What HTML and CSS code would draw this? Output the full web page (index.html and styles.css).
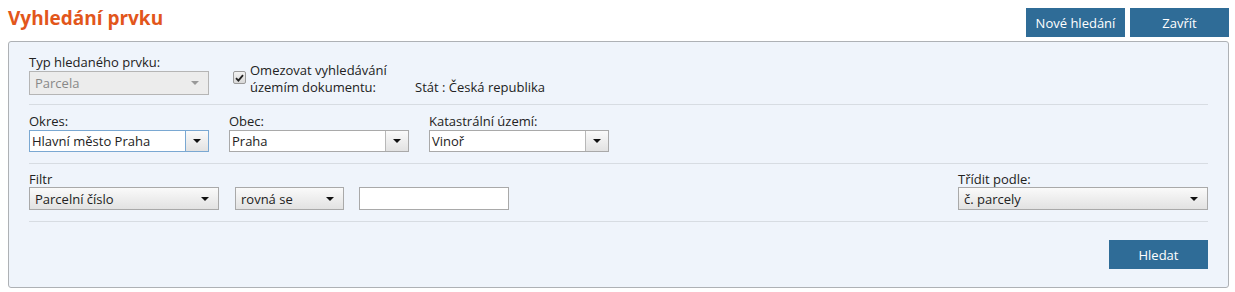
FILE: index.html
```html
<!DOCTYPE html>
<html lang="cs">
<head>
    <meta charset="UTF-8">
    <title>Vyhledání prvku</title>
    <link rel="stylesheet" href="styles.css">
</head>
<body>
    <div class="page">
        <!-- Hlavička -->
        <div class="top-bar">
            <h1 class="page-title">Vyhledání prvku</h1>
            <div class="top-actions">
                <button class="btn">Nové hledání</button>
                <button class="btn">Zavřít</button>
            </div>
        </div>

        <!-- Panel hledání -->
        <div class="search-panel">
            <div class="form-row row-type">
                <div class="field w180">
                    <label class="field-label">Typ hledaného prvku:</label>
                    <div class="select disabled"><span>Parcela</span><i class="arrow"></i></div>
                </div>
                <div class="check-group">
                    <span class="checkbox checked">
                        <svg width="9" height="8" viewBox="0 0 9 8"><path d="M1 4.2 L3.4 6.6 L8 1.2" fill="none" stroke="#222" stroke-width="1.8"/></svg>
                    </span>
                    <label class="check-label">Omezovat vyhledávání<br>územím dokumentu:</label>
                </div>
                <div class="state-text">Stát : Česká republika</div>
            </div>

            <div class="form-row row-area">
                <div class="field w180">
                    <label class="field-label">Okres:</label>
                    <div class="combo focused"><span class="combo-text">Hlavní město Praha</span><span class="combo-btn"><i class="arrow"></i></span></div>
                </div>
                <div class="field w180">
                    <label class="field-label">Obec:</label>
                    <div class="combo"><span class="combo-text">Praha</span><span class="combo-btn"><i class="arrow"></i></span></div>
                </div>
                <div class="field w180">
                    <label class="field-label">Katastrální území:</label>
                    <div class="combo"><span class="combo-text">Vinoř</span><span class="combo-btn"><i class="arrow"></i></span></div>
                </div>
            </div>

            <div class="form-row row-filter">
                <div class="field">
                    <label class="field-label">Filtr</label>
                    <div class="filter-controls">
                        <div class="select w190"><span>Parcelní číslo</span><i class="arrow"></i></div>
                        <div class="select w110"><span>rovná se</span><i class="arrow"></i></div>
                        <input type="text" class="text-input">
                    </div>
                </div>
                <div class="field sort-field">
                    <label class="field-label">Třídit podle:</label>
                    <div class="select w250"><span>č. parcely</span><i class="arrow"></i></div>
                </div>
            </div>

            <div class="form-actions">
                <button class="btn">Hledat</button>
            </div>
        </div>
    </div>
</body>
</html>
```

FILE: styles.css
```css
/* Základ */
* {
  margin: 0;
  padding: 0;
  box-sizing: border-box;
}

body {
  font-family: 'Open Sans', 'Liberation Sans', sans-serif;
  font-size: 13px;
  color: #222;
  background: #fff;
}

.page {
  padding: 8px 6px 0 8px;
}

/* Hlavička */
.top-bar {
  display: flex;
  justify-content: space-between;
  align-items: flex-start;
  height: 33px;
}

.page-title {
  font-size: 19px;
  font-weight: 700;
  color: #e2561b;
  line-height: 22px;
  margin-top: -1px;
}

.top-actions {
  display: flex;
  gap: 5px;
}

.btn {
  width: 99px;
  height: 29px;
  background: #2f6c97;
  color: #fff;
  border: none;
  font-family: inherit;
  font-size: 13px;
}

/* Panel */
.search-panel {
  border: 1px solid #aeb1b5;
  border-radius: 3px;
  background: #eff4fb;
  padding: 0 20px 18px;
}

.form-row {
  display: flex;
  border-bottom: 1px solid #d7dce2;
}

.row-type {
  padding: 12px 0 9px;
  align-items: flex-end;
}

.row-area {
  padding: 8px 0 11px;
  gap: 20px;
}

.row-filter {
  padding: 8px 0 11px;
  justify-content: space-between;
}

.row-filter .field-label {
  line-height: 14px;
}

.field {
  display: flex;
  flex-direction: column;
}

.field-label {
  line-height: 16px;
  margin-bottom: 1px;
}

.w180 { width: 180px; }
.w190 { width: 190px; }
.w110 { width: 110px; }
.w250 { width: 250px; }

/* Selecty */
.select {
  height: 23px;
  border: 1px solid #a9a9a9;
  background: linear-gradient(#fafafa, #e2e2e2);
  display: flex;
  align-items: center;
  justify-content: space-between;
  padding: 0 9px 0 5px;
  color: #222;
}

.select.disabled {
  height: 24px;
  background: #ececec;
  border-color: #b5b5b5;
  color: #888;
}

.select.disabled .arrow {
  border-top-color: #999;
}

.arrow {
  width: 0;
  height: 0;
  border-left: 4px solid transparent;
  border-right: 4px solid transparent;
  border-top: 4px solid #111;
}

/* Combo s tlačítkem */
.combo {
  height: 22px;
  border: 1px solid #a9a9a9;
  background: #fff;
  display: flex;
  color: #222;
}

.combo.focused {
  border-color: #7aa8d2;
}

.combo-text {
  flex: 1;
  padding-left: 2px;
  line-height: 20px;
}

.combo-btn {
  width: 23px;
  border-left: 1px solid #b8b8b8;
  background: linear-gradient(#fafafa, #e2e2e2);
  display: flex;
  align-items: center;
  justify-content: center;
}

.combo.focused .combo-btn {
  border-left-color: #7aa8d2;
}

/* Checkbox */
.check-group {
  display: flex;
  align-items: flex-start;
  width: 182px;
  margin-left: 24px;
  margin-bottom: -1px;
}

.checkbox {
  width: 13px;
  height: 13px;
  border: 1px solid #9a9a9a;
  border-radius: 2px;
  background: linear-gradient(#f2f2f2, #d8d8d8);
  display: flex;
  align-items: center;
  justify-content: center;
  margin-top: 9px;
  margin-right: 4px;
  flex-shrink: 0;
}

.check-label {
  line-height: 17px;
}

.state-text {
  line-height: 17px;
  margin-bottom: -1px;
}

/* Filtr */
.filter-controls {
  display: flex;
  gap: 16px;
}

.filter-controls .w110 {
  width: 109px;
}

.text-input {
  width: 150px;
  height: 23px;
  margin-left: -1px;
  border: 1px solid #a9a9a9;
  background: #fff;
}

/* Akce */
.form-actions {
  display: flex;
  justify-content: flex-end;
  padding-top: 18px;
}
```
